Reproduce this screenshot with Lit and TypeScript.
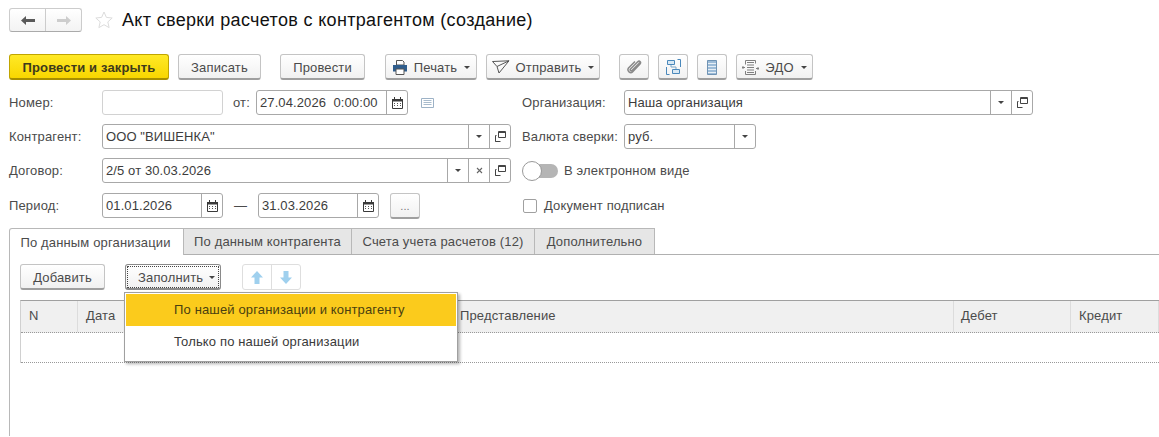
import { LitElement, html, css, svg } from "lit";
import { customElement } from "lit/decorators.js";

const arrowDown = svg`<svg width="6" height="3" viewBox="0 0 6 3"><path d="M0 0h6L3 3z" fill="#444"/></svg>`;

const calendarIcon = html`<svg width="11" height="12" viewBox="0 0 11 12">
  <path d="M.5 2.500h10v9H.5z" fill="#fff" stroke="#3a3a3a"/>
  <path d="M0 2h11v2.500H0z" fill="#3a3a3a"/>
  <path d="M2.500 0v2M8.500 0v2" stroke="#3a3a3a"/>
  <path d="M2 6.500h1M5 6.500h1M8 6.500h1M2 8.500h1M5 8.500h1M8 8.500h1" stroke="#555"/>
</svg>`;

const openIcon = html`<svg width="11" height="11" viewBox="0 0 11 11" fill="none" stroke="#444">
  <path d="M3.500 6.500V.5h7v6z"/><path d="M3.500 1.500h7"/>
  <path d="M1.500 4.500h-1v6h1M.5 10.500h5"/>
</svg>`;

const clearIcon = html`<svg width="7" height="7" viewBox="0 0 7 7"><path d="M1 1l5 5M6 1L1 6" stroke="#666" stroke-width="1.100"/></svg>`;

const printIcon = html`<svg width="16" height="15" viewBox="0 0 16 15">
  <path d="M4.500 .5h6l1.500 1.500v3H4.500z" fill="#fff" stroke="#555"/>
  <path d="M1 5h14v6.500H1z" fill="#2f5d8c"/>
  <path d="M4 9h8v5.500H4z" fill="#fff" stroke="#555"/>
</svg>`;

const sendIcon = html`<svg width="18" height="14" viewBox="0 0 18 14" fill="none" stroke="#555">
  <path d="M.5 1.500L17 .8 7 13 5 6.500z"/><path d="M5 6.500L17 .8"/>
</svg>`;

const clipIcon = html`<svg width="15" height="16" viewBox="0 0 15 16" fill="none" stroke="#8a8a8a" stroke-width="1.500">
  <path d="M13 3.500L5 11.500c-1 1-2.500-.5-1.500-1.500L10.500 3c2-2 4 0 2.500 2L5.500 13c-2 2-6-1-4-4L8 2.500"/>
</svg>`;

const structureIcon = html`<svg width="15" height="16" viewBox="0 0 15 16" fill="none" stroke="#4a88bb">
  <path d="M.5 8v7.500h3M14.500 8V.5h-3"/>
  <path d="M5 5.500V8h5v2.500" stroke="#7aa6c9"/>
  <path d="M1.500 1.500h7v4h-7zM6.500 10.500h7v4h-7z" fill="#d8e8f4"/>
</svg>`;

const listIcon = html`<svg width="10" height="15" viewBox="0 0 10 15">
  <path d="M.5.500h9v14h-9z" fill="#9dbcd8" stroke="#6f93b4"/>
  <path d="M1 3.500h8M1 6.500h8M1 9.500h8M1 12.500h8" stroke="#e6eef5"/>
</svg>`;

const edoIcon = html`<svg width="17" height="15" viewBox="0 0 17 15" fill="none" stroke="#808080">
  <path d="M3.500 4.500V.5h10v3M3.500 11v3.500h10V11"/>
  <path d="M5 2.500h7M5 5h7M5 7.500h7M5 10h7M5 12.500h7"/>
  <path d="M0 7.500h3M1.500 6L0 7.500 1.500 9M14 8.500h3M15.500 7L17 8.500 15.500 10"/>
</svg>`;

const noteIcon = html`<svg width="13" height="10" viewBox="0 0 13 10" fill="none">
  <path d="M.5.500h12v9H.5z" stroke="#9db2c6"/><path d="M2.500 2.500h8M2.500 4.500h8M2.500 6.500h8" stroke="#a9bccd"/>
</svg>`;

@customElement("app-root")
export class AppRoot extends LitElement {
  static styles = css`
    :host {
      display: block;
      width: 1159px;
      height: 437px;
      overflow: hidden;
      position: relative;
      background: #fff;
      color: #4b4b4b;
      font-family: "Liberation Sans", Arial, sans-serif;
      font-size: 13px;
      letter-spacing: 0.15px;
    }
    .head {
      display: flex;
      align-items: center;
      height: 24px;
      padding: 8px 0 0 9px;
    }
    .nav {
      display: flex;
      width: 73px;
      height: 24px;
      box-sizing: border-box;
      border: 1px solid #ccc;
      border-bottom-color: #aaa;
      border-radius: 3px;
      background: linear-gradient(#fff, #f3f3f3);
    }
    .nav span {
      flex: 1;
      display: flex;
      align-items: center;
      justify-content: center;
    }
    .nav span + span {
      border-left: 1px solid #ccc;
    }
    .star {
      margin-left: 13px;
      display: flex;
    }
    h1 {
      margin: 0 0 0 9px;
      font-size: 18px;
      font-weight: normal;
      letter-spacing: 0.33px;
      color: #111;
      white-space: nowrap;
    }
    .toolbar {
      display: flex;
      margin: 22px 0 0 9px;
      height: 26px;
    }
    .btn {
      display: inline-flex;
      align-items: center;
      justify-content: center;
      gap: 6px;
      box-sizing: border-box;
      height: 26px;
      padding-top: 1px;
      border: 1px solid #c4c4c4;
      border-bottom: 2px solid #9f9f9f;
      border-radius: 3px;
      background: linear-gradient(#fff, #f1f1f1);
      white-space: nowrap;
    }
    .btn .caret {
      margin-left: 1px;
      display: flex;
    }
    .primary {
      width: 160px;
      border-color: #c0a500;
      border-bottom-color: #a88f00;
      background: linear-gradient(#ffe927, #f8d600);
      font-weight: bold;
      color: #3e3a1c;
    }
    .form {
      display: grid;
      grid-template-columns: 502px 1fr;
      grid-template-rows: 25px 25px 25px 26px;
      row-gap: 9px;
      margin: 10px 0 0 9px;
      column-gap: 11px;
    }
    .row {
      display: flex;
      align-items: center;
    }
    .row.low {
      padding-top: 1px;
    }
    .label {
      width: 93px;
      flex: none;
    }
    .rlabel {
      width: 102px;
      flex: none;
    }
    .from {
      width: 23px;
      margin-left: 10px;
      flex: none;
    }
    .dash {
      width: 13px;
      margin: 0 11px;
      flex: none;
      letter-spacing: 0;
    }
    .note {
      margin-left: 13px;
      display: flex;
    }
    .input {
      display: flex;
      align-items: stretch;
      box-sizing: border-box;
      height: 25px;
      border: 1px solid #a8a8a8;
      border-radius: 3px;
      background: #fff;
      color: #3c3c3c;
      flex: none;
    }
    .input.empty {
      border-color: #d2d2d2;
    }
    .input .value {
      flex: 1;
      padding-left: 3px;
      line-height: 23px;
      letter-spacing: 0.1px;
      white-space: nowrap;
      overflow: hidden;
    }
    .input .cell {
      width: 20px;
      flex: none;
      display: flex;
      align-items: center;
      justify-content: center;
      border-left: 1px solid #a8a8a8;
    }
    .dots {
      width: 30px;
      height: 26px;
      color: #777;
      margin-left: 11px;
      font-size: 11px;
    }
    .toggle {
      display: flex;
      align-items: center;
      width: 36px;
      height: 20px;
      margin-right: 6px;
    }
    .toggle i {
      display: block;
      box-sizing: border-box;
      width: 20px;
      height: 20px;
      border-radius: 50%;
      border: 1px solid #999;
      background: #fff;
      position: relative;
      z-index: 1;
    }
    .toggle b {
      display: block;
      width: 26px;
      height: 14px;
      margin-left: -10px;
      border-radius: 0 7px 7px 0;
      background: #b5b5b5;
    }
    .check {
      box-sizing: border-box;
      width: 14px;
      height: 14px;
      margin: 0 7px 0 1px;
      border: 1px solid #a0a0a0;
      border-radius: 2px;
    }
    .tabs {
      display: flex;
      height: 26px;
      margin: 10px 0 0 9px;
      border-bottom: 1px solid #b0b0b0;
    }
    .tab {
      display: flex;
      align-items: center;
      justify-content: center;
      box-sizing: border-box;
      height: 26px;
      background: #e6e6e6;
      border: 1px solid #b8b8b8;
      border-bottom: none;
      border-left: none;
      white-space: nowrap;
    }
    .tab.on {
      height: 27px;
      padding-right: 2px;
      background: #fff;
      border-left: 1px solid #b8b8b8;
      border-radius: 3px 0 0 0;
      position: relative;
    }
    .panel {
      margin-left: 9px;
      border-left: 1px solid #b8b8b8;
      padding: 9px 0 0 10px;
      height: 172px;
    }
    .actions {
      display: flex;
      height: 26px;
    }
    .fill {
      width: 96px;
      margin-left: 20px;
      padding-left: 12px;
      justify-content: flex-start;
      border: 1px solid #8a8a8a;
      border-bottom: 2px solid #8a8a8a;
      outline: 1px dotted #444;
      outline-offset: -3px;
    }
    .arrows {
      display: flex;
      width: 59px;
      height: 26px;
      margin-left: 21px;
      box-sizing: border-box;
      border: 1px solid #dedede;
      border-radius: 3px;
    }
    .arrows span {
      flex: 1;
      display: flex;
      align-items: center;
      justify-content: center;
    }
    .arrows span + span {
      border-left: 1px solid #dedede;
    }
    .table {
      margin-top: 10px;
      border-top: 1px solid #a0a0a0;
      border-left: 1px solid #d0d0d0;
    }
    .thead {
      display: grid;
      grid-template-columns: 57px 377px 499px 117px 1fr;
      height: 31px;
      background: #f0f0f0;
      border-bottom: 1px dotted #999;
    }
    .thead div {
      display: flex;
      align-items: center;
      padding: 0 0 2px 8px;
      border-right: 1px solid #dcdcdc;
    }
    .thead .pres {
      padding-left: 5px;
    }
    .thead .debit {
      padding-left: 7px;
    }
    .tr {
      height: 29px;
      border-bottom: 1px dotted #999;
    }
    .menu {
      position: absolute;
      left: 124px;
      top: 292px;
      box-sizing: border-box;
      width: 334px;
      height: 70px;
      padding: 1px;
      background: #fff;
      border: 1px solid #a0a0a0;
      box-shadow: 2px 2px 3px rgba(0, 0, 0, 0.3);
      color: #3a3a3a;
    }
    .menu div {
      height: 32px;
      line-height: 32px;
      padding-left: 48px;
      white-space: nowrap;
    }
    .menu .active {
      background: #fbcb1c;
      color: #4a3f10;
    }
  `;

  render() {
    return html`
      <div class="head">
        <div class="nav">
          <span><svg width="14" height="9" viewBox="0 0 14 9"><path d="M0 4.500L5 0v3h9v3H5v3z" fill="#5a5a5a"/></svg></span>
          <span><svg width="14" height="9" viewBox="0 0 14 9"><path d="M14 4.500L9 0v3H0v3h9v3z" fill="#cdcdcd"/></svg></span>
        </div>
        <span class="star"><svg width="18" height="18" viewBox="0 0 18 18"><path d="M9 1l2.400 5.400 5.800.6-4.400 3.900 1.300 5.700L9 13.700l-5.100 2.900 1.300-5.700L.8 7l5.800-.6z" fill="#fff" stroke="#dcdcdc"/></svg></span>
        <h1>Акт сверки расчетов с контрагентом (создание)</h1>
      </div>

      <div class="toolbar">
        <span class="btn primary">Провести и закрыть</span>
        <span class="btn" style="width:83px;margin-left:9px">Записать</span>
        <span class="btn" style="width:85px;margin-left:19px">Провести</span>
        <span class="btn" style="width:92px;margin-left:20px">${printIcon} Печать <span class="caret">${arrowDown}</span></span>
        <span class="btn" style="width:114px;margin-left:9px">${sendIcon} Отправить <span class="caret">${arrowDown}</span></span>
        <span class="btn" style="width:30px;margin-left:19px">${clipIcon}</span>
        <span class="btn" style="width:30px;margin-left:9px">${structureIcon}</span>
        <span class="btn" style="width:30px;margin-left:9px">${listIcon}</span>
        <span class="btn" style="width:77px;margin-left:9px">${edoIcon} ЭДО <span class="caret">${arrowDown}</span></span>
      </div>

      <div class="form">
        <div class="row">
          <span class="label">Номер:</span>
          <span class="input empty" style="width:121px"></span>
          <span class="from">от:</span>
          <span class="input" style="width:152px">
            <span class="value">27.04.2026&nbsp; 0:00:00</span>
            <span class="cell">${calendarIcon}</span>
          </span>
          <span class="note">${noteIcon}</span>
        </div>
        <div class="row">
          <span class="rlabel">Организация:</span>
          <span class="input" style="width:409px">
            <span class="value">Наша организация</span>
            <span class="cell">${arrowDown}</span>
            <span class="cell">${openIcon}</span>
          </span>
        </div>

        <div class="row">
          <span class="label">Контрагент:</span>
          <span class="input" style="width:409px">
            <span class="value">ООО "ВИШЕНКА"</span>
            <span class="cell">${arrowDown}</span>
            <span class="cell">${openIcon}</span>
          </span>
        </div>
        <div class="row">
          <span class="rlabel">Валюта сверки:</span>
          <span class="input" style="width:132px">
            <span class="value">руб.</span>
            <span class="cell">${arrowDown}</span>
          </span>
        </div>

        <div class="row">
          <span class="label">Договор:</span>
          <span class="input" style="width:409px">
            <span class="value">2/5 от 30.03.2026</span>
            <span class="cell">${arrowDown}</span>
            <span class="cell">${clearIcon}</span>
            <span class="cell">${openIcon}</span>
          </span>
        </div>
        <div class="row">
          <span class="toggle"><i></i><b></b></span>
          <span>В электронном виде</span>
        </div>

        <div class="row low">
          <span class="label">Период:</span>
          <span class="input" style="width:121px">
            <span class="value">01.01.2026</span>
            <span class="cell">${calendarIcon}</span>
          </span>
          <span class="dash">—</span>
          <span class="input" style="width:121px">
            <span class="value">31.03.2026</span>
            <span class="cell">${calendarIcon}</span>
          </span>
          <span class="btn dots">...</span>
        </div>
        <div class="row low">
          <span class="check"></span>
          <span>Документ подписан</span>
        </div>
      </div>

      <div class="tabs">
        <span class="tab on" style="width:175px">По данным организации</span>
        <span class="tab" style="width:168px">По данным контрагента</span>
        <span class="tab" style="width:183px">Счета учета расчетов (12)</span>
        <span class="tab" style="width:120px">Дополнительно</span>
      </div>

      <div class="panel">
        <div class="actions">
          <span class="btn" style="width:85px">Добавить</span>
          <span class="btn fill">Заполнить ${arrowDown}</span>
          <div class="arrows">
            <span><svg width="12" height="13" viewBox="0 0 12 13"><path d="M6 0l6 6.500H8.500V13h-5V6.500H0z" fill="#9fd0ee"/></svg></span>
            <span><svg width="12" height="13" viewBox="0 0 12 13"><path d="M6 13l6-6.500H8.500V0h-5v6.500H0z" fill="#9fd0ee"/></svg></span>
          </div>
        </div>
        <div class="table">
          <div class="thead">
            <div>N</div>
            <div>Дата</div>
            <div class="pres">Представление</div>
            <div class="debit">Дебет</div>
            <div>Кредит</div>
          </div>
          <div class="tr"></div>
        </div>
      </div>

      <div class="menu">
        <div class="active">По нашей организации и контрагенту</div>
        <div>Только по нашей организации</div>
      </div>
    `;
  }
}
